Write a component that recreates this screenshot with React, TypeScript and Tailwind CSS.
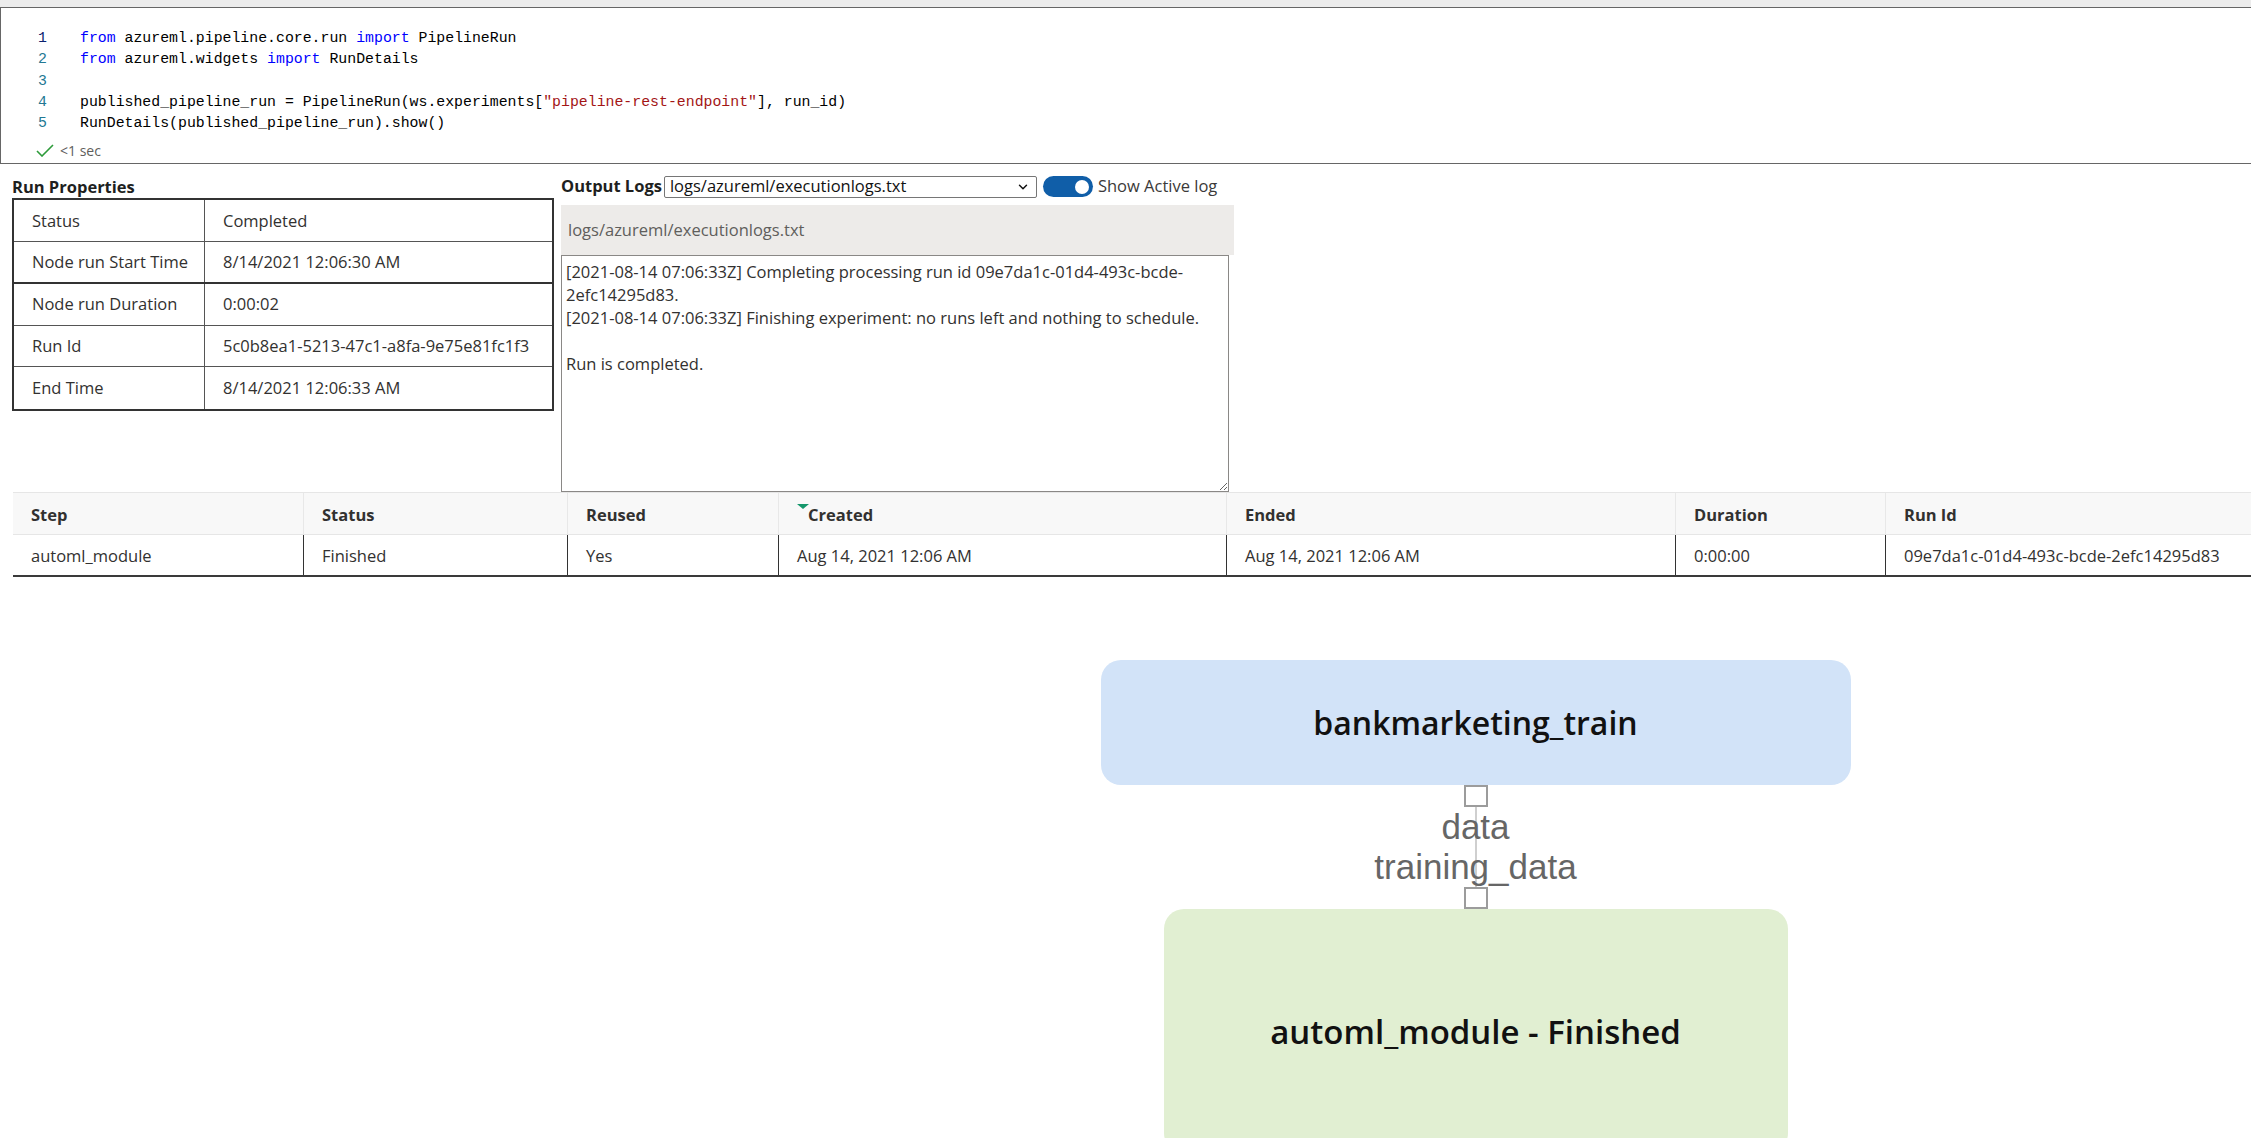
import React from 'react';
import { ChevronDown } from 'lucide-react';

const props: [string, string][] = [
  ['Status', 'Completed'],
  ['Node run Start Time', '8/14/2021 12:06:30 AM'],
  ['Node run Duration', '0:00:02'],
  ['Run Id', '5c0b8ea1-5213-47c1-a8fa-9e75e81fc1f3'],
  ['End Time', '8/14/2021 12:06:33 AM'],
];

const stepCols = ['Step', 'Status', 'Reused', 'Created', 'Ended', 'Duration', 'Run Id'];
const stepRow = [
  'automl_module',
  'Finished',
  'Yes',
  'Aug 14, 2021 12:06 AM',
  'Aug 14, 2021 12:06 AM',
  '0:00:00',
  '09e7da1c-01d4-493c-bcde-2efc14295d83',
];

const logText =
  '[2021-08-14 07:06:33Z] Completing processing run id 09e7da1c-01d4-493c-bcde-\n2efc14295d83.\n[2021-08-14 07:06:33Z] Finishing experiment: no runs left and nothing to schedule.\n\nRun is completed.';

const Kw = ({ children }: { children: React.ReactNode }) => <span className="text-[#0000ff]">{children}</span>;

const CodeCell: React.FC = () => {
  const lines: React.ReactNode[] = [
    <>
      <Kw>from</Kw> azureml.pipeline.core.run <Kw>import</Kw> PipelineRun
    </>,
    <>
      <Kw>from</Kw> azureml.widgets <Kw>import</Kw> RunDetails
    </>,
    <>&nbsp;</>,
    <>
      published_pipeline_run = PipelineRun(ws.experiments[
      <span className="text-[#a31515]">"pipeline-rest-endpoint"</span>], run_id)
    </>,
    <>RunDetails(published_pipeline_run).show()</>,
  ];

  return (
    <div className="border-y border-l border-[#666666] bg-white pt-[20px] pb-[4px]">
      <div className="flex font-['Liberation_Mono',monospace] text-[14.85px] leading-[21.25px] text-black">
        <div className="w-[46px] text-right">
          {lines.map((_, i) => (
            <div key={i} className={i === 0 ? 'text-[#0b216f]' : 'text-[#237893]'}>
              {i + 1}
            </div>
          ))}
        </div>
        <div className="ml-[33px] whitespace-pre">
          {lines.map((l, i) => (
            <div key={i}>{l}</div>
          ))}
        </div>
      </div>
      <div className="mt-[7px] flex h-[18px] items-center pl-[35px] font-['Open_Sans',sans-serif] text-[14px] text-[#605e5c]">
        <svg width="18" height="13" viewBox="0 0 18 13" fill="none">
          <path d="M1 7l5 5L17 1" stroke="#2d9b3a" strokeWidth="1.6" />
        </svg>
        <span className="ml-[6px]">&lt;1 sec</span>
      </div>
    </div>
  );
};

const RunProperties: React.FC = () => (
  <div className="ml-[12px] w-[542px] pt-[12px]">
    <div className="h-[22px] text-[16.5px] font-bold leading-[22px] text-[#201f1e]">Run Properties</div>
    <div className="border-2 border-[#333333]">
      {props.map(([k, v], i) => (
        <div
          key={k}
          className={`grid h-[41.8px] grid-cols-[191px_1fr] items-stretch ${
            i === props.length - 1 ? '' : i === 1 ? 'border-b-2 border-[#333333]' : 'border-b border-[#555555]'
          }`}
        >
          <div className="flex items-center border-r border-[#555555] pl-[18px] pt-[1px]">{k}</div>
          <div className="flex items-center pl-[18px] pt-[1px]">{v}</div>
        </div>
      ))}
    </div>
  </div>
);

const OutputLogs: React.FC = () => (
  <div className="ml-[7px] pt-[10px]">
    <div className="flex h-[25px] items-center">
      <span className="text-[16.5px] font-bold text-[#201f1e]">Output Logs</span>
      <div className="ml-[2px] flex h-[22px] w-[373px] items-center justify-between rounded-[2px] border border-[#767676] pl-[5px] pr-[6px] text-[16.5px] text-[#111]">
        <span>logs/azureml/executionlogs.txt</span>
        <ChevronDown size={14} strokeWidth={2.5} />
      </div>
      <div className="ml-[6px] flex h-[21px] w-[50px] items-center justify-end rounded-full bg-[#105ea8] pr-[4px]">
        <div className="h-[14px] w-[14px] rounded-full bg-white" />
      </div>
      <span className="ml-[5px] text-[16.5px] text-[#3b3a39]">Show Active log</span>
    </div>
    <div className="mt-[6px] flex h-[50px] w-[673px] items-center bg-[#edebe9] pl-[7px] text-[16.5px] text-[#605e5c]">
      logs/azureml/executionlogs.txt
    </div>
    <textarea
      readOnly
      value={logText}
      className="block h-[237px] w-[668px] resize border border-[#8a8886] px-[4px] pt-[4px] font-['Open_Sans',sans-serif] text-[16.5px] leading-[23px] text-[#323130] outline-none"
    />
  </div>
);

const StepsTable: React.FC = () => (
  <div className="ml-[13px]">
    <div className="grid h-[43px] grid-cols-[290px_264px_211px_448px_449px_210px_1fr] border-y border-[#e6e6e6] bg-[#f8f8f8] font-bold text-[#323130]">
      {stepCols.map((c, i) => (
        <div key={c} className={`flex items-center pt-[3px] ${i === 0 ? 'pl-[18px]' : 'border-l border-[#e8e8e8] pl-[18px]'}`}>
          {c === 'Created' ? (
            <>
              <svg width="12" height="5" viewBox="0 0 12 5" className="mb-[18px]">
                <path d="M0 0h12L6 5z" fill="#14976b" />
              </svg>
              <span className="-ml-[1px]">{c}</span>
            </>
          ) : (
            c
          )}
        </div>
      ))}
    </div>
    <div className="grid h-[42px] grid-cols-[290px_264px_211px_448px_449px_210px_1fr] border-b-2 border-[#3a3a3a] text-[#323130]">
      {stepRow.map((c, i) => (
        <div key={i} className={`flex items-center pl-[18px] pt-[3px] ${i === 0 ? '' : 'border-l border-[#333333]'}`}>
          {c}
        </div>
      ))}
    </div>
  </div>
);

const Port = () => <div className="h-[22px] w-[24px] border-2 border-[#9c9c9c] bg-white" />;

const Graph: React.FC = () => (
  <div className="mt-[83px] flex flex-col items-center pl-[700px] font-['Open_Sans',sans-serif]">
    <div className="flex h-[125px] w-[750px] items-center justify-center rounded-[20px] bg-[#d2e3f8] text-[32px] font-semibold text-[#111]">
      bankmarketing_train
    </div>
    <Port />
    <div className="relative flex h-[80px] w-[320px] items-center justify-center">
      <div className="absolute left-1/2 top-0 h-full w-[2px] -translate-x-1/2 bg-[#cfcfcf]" />
      <div className="relative text-center font-['Liberation_Sans',sans-serif] text-[35px] leading-[40px] text-[#666666]">
        data
        <br />
        training_data
      </div>
    </div>
    <Port />
    <div className="flex h-[244px] w-[624px] items-center justify-center rounded-[20px] bg-[#e1efd2] text-[33px] font-semibold text-[#111]">
      automl_module - Finished
    </div>
  </div>
);

export default function App() {
  return (
    <div className="h-screen w-full overflow-hidden bg-white font-['Open_Sans',sans-serif] text-[16.5px] text-[#323130]">
      <div className="h-[7px] bg-[#ececec]" />
      <CodeCell />
      <div className="flex items-start">
        <RunProperties />
        <OutputLogs />
      </div>
      <StepsTable />
      <Graph />
    </div>
  );
}
